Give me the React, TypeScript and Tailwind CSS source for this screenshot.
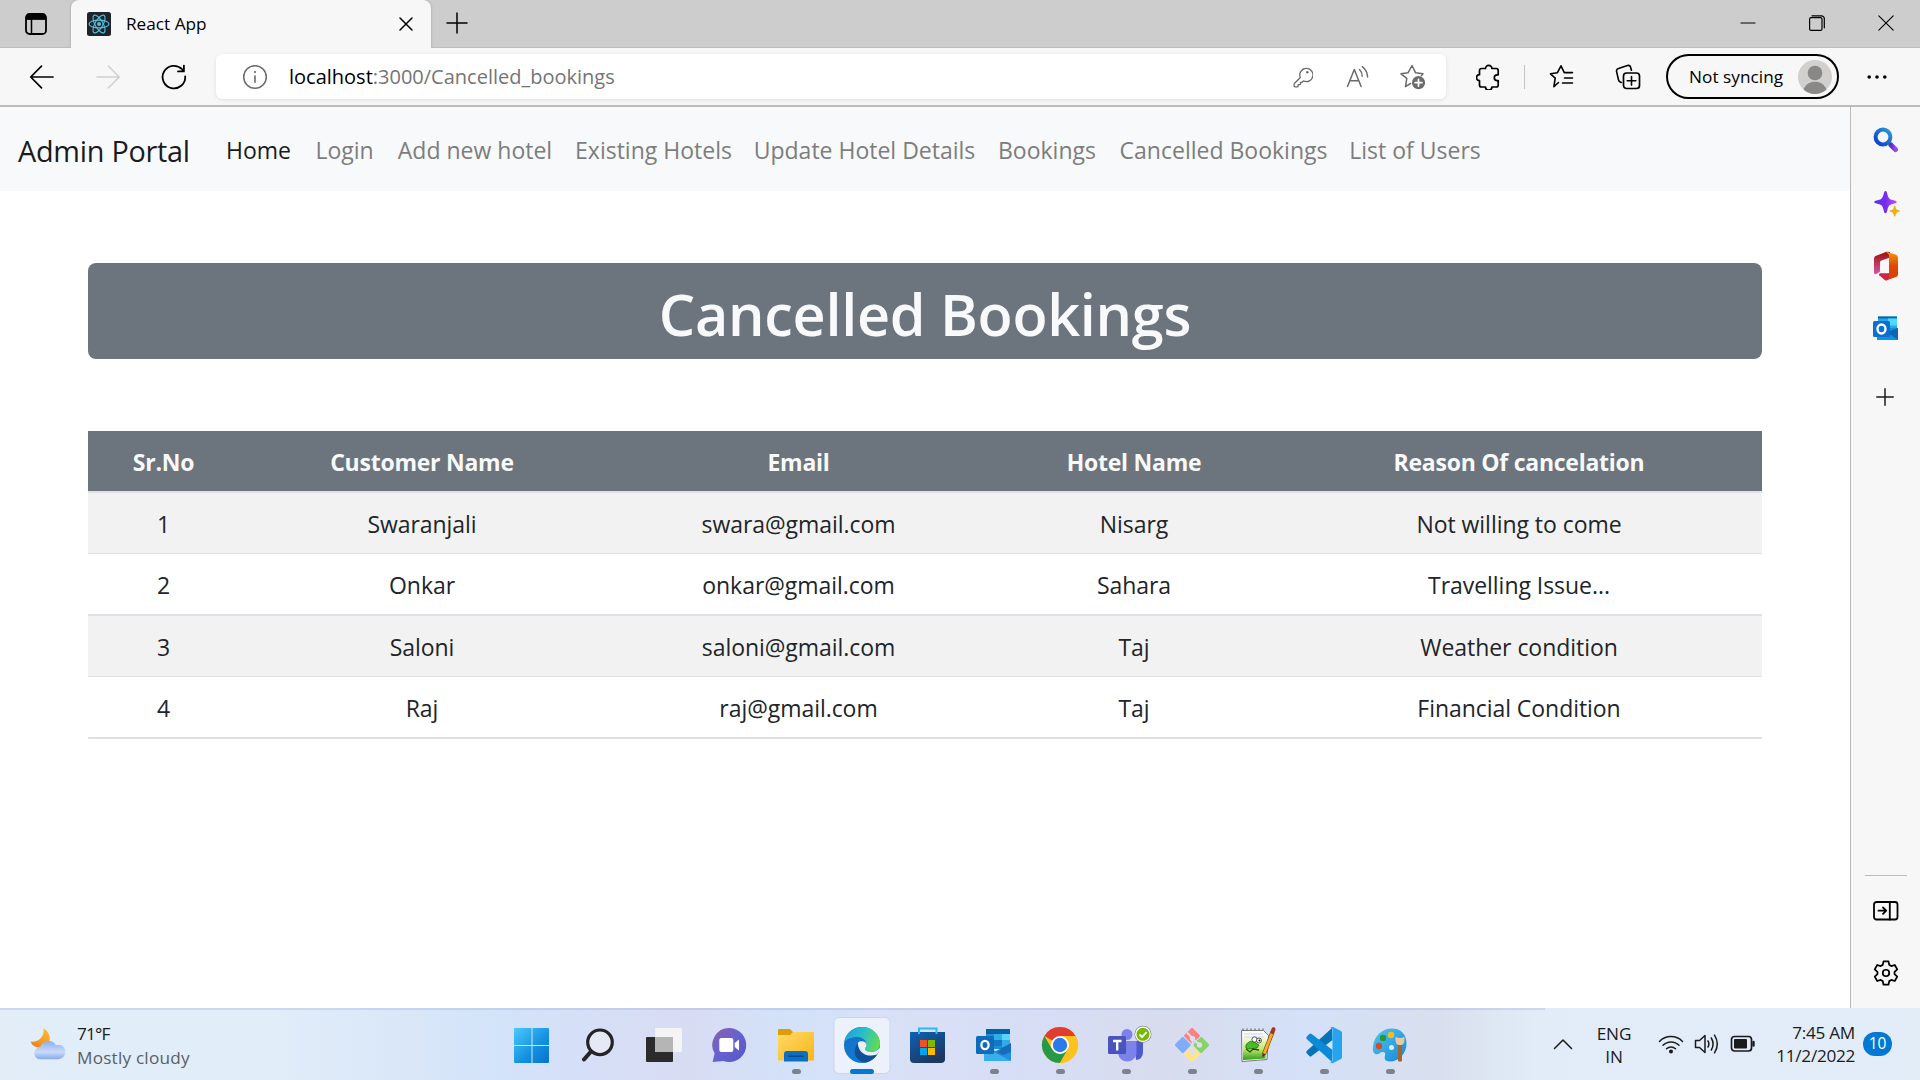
import React from "react";

const navLinks = [
  { label: "Home", cls: "w-[65px] text-[#1a1b1c]" },
  { label: "Login", cls: "w-[59px] text-[#7c7d7d]" },
  { label: "Add new hotel", cls: "w-[154px] text-[#7c7d7d]" },
  { label: "Existing Hotels", cls: "w-[155px] text-[#7c7d7d]" },
  { label: "Update Hotel Details", cls: "w-[219px] text-[#7c7d7d]" },
  { label: "Bookings", cls: "w-[98px] text-[#7c7d7d]" },
  { label: "Cancelled Bookings", cls: "w-[207px] text-[#7c7d7d]" },
  { label: "List of Users", cls: "w-[128px] text-[#7c7d7d]" },
];

const columns = ["Sr.No", "Customer Name", "Email", "Hotel Name", "Reason Of cancelation"];

const rows = [
  ["1", "Swaranjali", "swara@gmail.com", "Nisarg", "Not willing to come"],
  ["2", "Onkar", "onkar@gmail.com", "Sahara", "Travelling Issue..."],
  ["3", "Saloni", "saloni@gmail.com", "Taj", "Weather condition"],
  ["4", "Raj", "raj@gmail.com", "Taj", "Financial Condition"],
];

type IconProps = { children: React.ReactNode; w?: number; h?: number; className?: string };

function Icon({ children, w = 24, h = 24, className = "" }: IconProps) {
  return (
    <svg width={w} height={h} viewBox={`0 0 ${w} ${h}`} fill="none" stroke="currentColor" strokeWidth="1.6" strokeLinecap="round" strokeLinejoin="round" className={"shrink-0 " + className}>
      {children}
    </svg>
  );
}

function ReactLogo() {
  return (
    <svg width="24" height="24" viewBox="0 0 24 24" fill="none" className="shrink-0">
      <rect width="24" height="24" rx="2.5" fill="#20232a" />
      <g stroke="#53c1de" strokeWidth="1.1">
        <ellipse cx="12" cy="12" rx="10" ry="3.9" transform="rotate(0 12 12)" />
        <ellipse cx="12" cy="12" rx="10" ry="3.9" transform="rotate(60 12 12)" />
        <ellipse cx="12" cy="12" rx="10" ry="3.9" transform="rotate(120 12 12)" />
      </g>
      <circle cx="12" cy="12" r="2" fill="#53c1de" />
    </svg>
  );
}

function TabStrip() {
  return (
    <div className="flex h-12 items-stretch border-b border-[#bdbdbd] bg-[#cdcdcd]">
      <div className="flex w-[71px] items-center justify-center text-black">
        <Icon w={22} h={22}>
          <rect x="1" y="1" width="20" height="20" rx="3.5" strokeWidth="1.8" />
          <path d="M1.5 6V4a3 3 0 0 1 3-3h13a3 3 0 0 1 3 3v2z" fill="currentColor" strokeWidth="1" />
          <path d="M6.5 6v15" strokeWidth="1.5" />
        </Icon>
      </div>
      <div className="-mb-px flex w-[360px] items-center rounded-t-lg bg-[#f7f7f7] pl-4 pr-[18px] shadow-[0_0_3px_rgba(0,0,0,0.2)] [clip-path:inset(0_-4px_0_-4px)]">
        <ReactLogo />
        <span className="ml-[15px] flex-1 text-[17.2px] text-black">React App</span>
        <Icon w={14} h={14} className="text-black">
          <path d="M1 1l12 12M13 1L1 13" strokeWidth="1.5" />
        </Icon>
      </div>
      <div className="ml-[15px] flex items-center pb-px text-black">
        <Icon w={22} h={22}>
          <path d="M11 1v20M1 11h20" strokeWidth="1.5" />
        </Icon>
      </div>
      <div className="ml-auto flex items-center pb-px text-black">
        <div className="flex w-[69px] justify-center">
          <Icon w={16} h={16}><path d="M1 8h14" strokeWidth="1.2" /></Icon>
        </div>
        <div className="flex w-[69px] justify-center">
          <Icon w={16} h={16}>
            <rect x="0.6" y="2.6" width="12.4" height="12.8" rx="1.5" strokeWidth="1.2" />
            <path d="M3 .8h9.5a2.8 2.8 0 0 1 2.8 2.8v9.2" strokeWidth="1.2" />
          </Icon>
        </div>
        <div className="flex w-[69px] justify-center">
          <Icon w={16} h={16}><path d="M.8.8l14.4 14.4M15.2.8L.8 15.2" strokeWidth="1.1" /></Icon>
        </div>
      </div>
    </div>
  );
}

function AddressBar() {
  return (
    <div className="flex h-[45px] w-[1230px] items-center rounded-md bg-white pl-[26px] pr-[20px] text-[#6b6b6b] shadow-[0_1px_4px_rgba(0,0,0,0.1)]">
      <Icon w={26} h={26}>
        <circle cx="13" cy="13" r="11.3" strokeWidth="1.5" />
        <path d="M13 12v6.2" strokeWidth="1.6" />
        <circle cx="13" cy="8" r="1.1" fill="currentColor" stroke="none" />
      </Icon>
      <span className="ml-[21px] flex-1 text-[20px] text-[#757575]">
        <span className="text-black">localhost</span>:3000/Cancelled_bookings
      </span>
      <Icon w={20} h={22} className="mr-[33px]">
        <path d="M7.3 11.5L1.6 17.2a1.5 1.5 0 0 0-.5 1.1V20a.9.9 0 0 0 .9.9h2.2a.9.9 0 0 0 .9-.9v-1.3h1.6a.8.8 0 0 0 .8-.8v-1.6h1.6l1.4-1.4a6.6 6.6 0 1 0-3.2-3.4z" strokeWidth="1.3" />
        <circle cx="14.3" cy="6.2" r="1.2" fill="currentColor" stroke="none" />
      </Icon>
      <Icon w={24} h={24} className="mr-[30px]">
        <path d="M1.5 21.5L8.3 4.5l6.8 17M4 15.8h8.8" strokeWidth="1.5" />
        <path d="M13.5 4.6c1.8 1.7 2.7 4 2.7 6.6M16.3 1.6c3.2 2.5 5 6 5.3 10.4" strokeWidth="1.4" />
      </Icon>
      <Icon w={26} h={26}>
        <path d="M10.5 19.5l-5 3.1 1.3-8.200L1 9.800l7-1L12 1.500l3.600 7.300 7.400 1-1.500 1.700" strokeWidth="1.500" />
        <circle cx="18.500" cy="18.700" r="6.600" fill="currentColor" stroke="none" />
        <path d="M18.500 15.300v6.800M15.100 18.700h6.800" stroke="#fff" strokeWidth="1.700" />
      </Icon>
    </div>
  );
}

function Toolbar() {
  return (
    <div className="flex h-[59px] items-center border-b-2 border-[#bcbcbc] bg-[#f7f7f7] text-black">
      <Icon w={26} h={26} className="ml-[29px]">
        <path d="M24 13H2M12.500 2.200L1.700 13l10.800 10.800" strokeWidth="1.700" />
      </Icon>
      <Icon w={26} h={26} className="ml-10 text-[#cfcfcf]">
        <path d="M2 13h22M13.500 2.200L24.300 13 13.500 23.800" strokeWidth="1.600" />
      </Icon>
      <Icon w={26} h={26} className="ml-10 mr-[29px]">
        <path d="M24.200 12.500A11.300 11.300 0 1 1 21 5.200l1.700 1.800M22.900 1.600V7.400H17" strokeWidth="1.800" />
      </Icon>
      <AddressBar />
      <Icon w={26} h={26} className="ml-[30px]">
        <path d="M5.500 4.500h4a3.200 3.200 0 0 1 6.400 0h4.300a2 2 0 0 1 2 2v4.300h-1a2.900 2.900 0 0 0 0 5.800h1v4.400a2 2 0 0 1-2 2h-4.300a3.200 3.200 0 0 1-6.400 0h-4a2 2 0 0 1-2-2v-4.300a3 3 0 0 1 0-6V6.500a2 2 0 0 1 2-2z" strokeWidth="1.700" />
      </Icon>
      <div className="ml-[22px] h-6 w-px bg-[#c4c4c4]" />
      <Icon w={26} h={26} className="ml-[24px]">
        <path d="M9.500 18.500l-4.600 4.200 1.300-8.600L1.500 9.800l6.800-1L12 1.800l3.300 6.800h8.200M15.500 14h8M13.500 19h10" strokeWidth="1.600" />
      </Icon>
      <Icon w={26} h={26} className="ml-[40px]">
        <path d="M6.300 18.500L4.900 17.800a3 3 0 0 1-1.400-2L1.600 7.600A2.500 2.500 0 0 1 3.500 4.500l9-2.900a2.500 2.500 0 0 1 3.100 1.700l.8 3" strokeWidth="1.600" />
        <rect x="8.500" y="9" width="16" height="15.500" rx="3" strokeWidth="1.700" />
        <path d="M16.500 12.500v8.600M12.200 16.800h8.600" strokeWidth="1.600" />
      </Icon>
      <div className="ml-[25px] flex h-[45px] w-[173px] items-center justify-between rounded-full border-2 border-black pl-[21px] pr-[5px]">
        <span className="text-[17.2px] tracking-[0.05px]">Not syncing</span>
        <svg width="34" height="34" viewBox="0 0 34 34">
          <circle cx="17" cy="17" r="17" fill="#d2d0ce" />
          <circle cx="17" cy="13" r="7.300" fill="#8a8886" />
          <path d="M5.500 29.500C8 24 12 21.800 17 21.800S26 24 28.500 29.500A17 17 0 0 1 5.500 29.500z" fill="#8a8886" />
        </svg>
      </div>
      <svg width="20" height="6" viewBox="0 0 20 6" className="ml-[28px]">
        <circle cx="2.200" cy="3" r="1.800" /><circle cx="10" cy="3" r="1.800" /><circle cx="17.800" cy="3" r="1.800" />
      </svg>
    </div>
  );
}

function Page() {
  return (
    <main className="flex-1 bg-white">
      <nav className="flex h-[84px] items-center bg-[#f8f9fb] pl-[18px] pt-[3px]">
        <span className="w-[172px] whitespace-nowrap text-[28.800px] tracking-[-0.25px] text-[#1a1b1c]">Admin Portal</span>
        <div className="ml-9 flex gap-6 text-[23px]">
          {navLinks.map((l) => (
            <a key={l.label} className={"flex justify-center whitespace-nowrap " + l.cls}>{l.label}</a>
          ))}
        </div>
      </nav>
      <div className="pl-[88px] pt-[72px]">
        <h1 className="flex h-24 w-[1674px] items-center justify-center rounded-lg bg-[#6c757d] pt-2 text-[57.500px] font-semibold leading-none tracking-[-0.28px] text-[#f8f9fa]">
          Cancelled Bookings
        </h1>
        <table className="mt-[72px] w-[1674px] table-fixed border-separate border-spacing-0 text-center text-[23px] text-[#212529]">
          <colgroup>
            <col className="w-[151px]" /><col className="w-[366px]" /><col className="w-[387px]" /><col className="w-[284px]" /><col className="w-[486px]" />
          </colgroup>
          <thead>
            <tr className="bg-[#6c757d] text-[#f8f9fa]">
              {columns.map((c) => (
                <th key={c} className="h-[62px] border-b-2 border-[#dee2e6] p-0 pt-[3px] font-bold tracking-[-0.25px]">{c}</th>
              ))}
            </tr>
          </thead>
          <tbody>
            {rows.map((r, n) => (
              <tr key={r[0]} className="odd:bg-[#f2f2f2]">
                {r.map((v, i) => (
                  <td key={i} className={"border-[#dee2e6] p-0 pt-[2px] tracking-[-0.05px] " + (n % 2 ? "h-[62px] border-b-2" : "h-[61px] border-b")}>{v}</td>
                ))}
              </tr>
            ))}
          </tbody>
        </table>
      </div>
    </main>
  );
}

function Sidebar() {
  return (
    <aside className="flex w-[70px] flex-col items-center border-l border-[#bababa] bg-[#f7f7f7] text-[#1b1b1b]">
      <svg width="26" height="26" viewBox="0 0 26 26" className="mt-5 shrink-0">
        <defs>
          <linearGradient id="sb1" x1="0" y1="1" x2="1" y2="0"><stop stopColor="#0a3bd0" /><stop offset="1" stopColor="#2c9ad6" /></linearGradient>
          <linearGradient id="sb2"><stop stopColor="#5b2bd6" /><stop offset="1" stopColor="#a044f2" /></linearGradient>
        </defs>
        <path d="M18 18l4.500 4.500" stroke="url(#sb2)" strokeWidth="5" strokeLinecap="round" />
        <path d="M15 15l3 3" stroke="#39417a" strokeWidth="2.500" />
        <circle cx="10" cy="10" r="7.400" fill="none" stroke="url(#sb1)" strokeWidth="4" />
      </svg>
      <svg width="28" height="28" viewBox="0 0 28 28" className="ml-[3px] mt-[37px] shrink-0">
        <path d="M12.500 1c1.300 0 1.500 1.700 2.100 4 .9 3.300 1.900 4.300 5.100 5.100 2.300.6 4 .8 4 2s-1.700 1.400-4 2c-3.200.8-4.200 1.800-5.100 5.100-.6 2.300-.8 4-2.100 4s-1.500-1.700-2.100-4c-.9-3.300-1.900-4.300-5.100-5.100-2.300-.6-4-.8-4-2s1.700-1.400 4-2c3.200-.8 4.200-1.800 5.100-5.100.6-2.300.8-4 2.100-4z" fill="url(#sp)" />
        <path d="M21.700 15.500c1 0 .8 3 2 4s3.300.6 3.300 1.600-2.100.6-3.300 1.600-1 4-2 4-.8-3-2-4-3.300-.6-3.300-1.600 2.100-.6 3.300-1.600 1-4 2-4z" fill="#f2ae13" />
        <defs><linearGradient id="sp" x1="0" x2="1"><stop stopColor="#4b3be0" /><stop offset=".5" stopColor="#7a2af0" /><stop offset="1" stopColor="#bb57f5" /></linearGradient></defs>
      </svg>
      <svg width="26" height="30" viewBox="0 0 26 30" className="mt-[33px] shrink-0">
        <defs>
          <linearGradient id="of1" x1="0" y1="0" x2="0" y2="1"><stop stopColor="#a01010" /><stop offset="1" stopColor="#d658a4" /></linearGradient>
          <linearGradient id="of2" x1="0" y1="0" x2="0" y2="1"><stop stopColor="#f69a07" /><stop offset=".5" stopColor="#dd4706" /><stop offset="1" stopColor="#dd3c04" /></linearGradient>
        </defs>
        <path d="M13.500.800L2.500 5Q1 5.700 1 7.400v13.800Q1 24 3.200 22.900l3-1.700Q7 20.700 7 19.700V11.500Q7 10 8.500 9.500l8.500-3V1z" fill="url(#of1)" />
        <path d="M13 .800L22.500 3.500Q25 4.300 25 6.500v17Q25 25.500 23 26l-10 3.500L16 22V4z" fill="url(#of2)" />
        <path d="M6.300 24.200Q5.500 23 7 22.300h9v5q-1 2.700-4 2z" fill="#cf2442" />
      </svg>
      <svg width="26" height="25" viewBox="0 0 26 25" className="mt-[35px] shrink-0">
        <path d="M5 .500h19v16H5z" fill="#28a8ea" /><path d="M5 .500h19v2H5z" fill="#0a64ad" /><path d="M15 2.500h9v7h-9z" fill="#50d9ff" />
        <path d="M4 12h21v12H4z" fill="#1490df" /><path d="M25 12v12L14 16z" fill="#1066b5" />
        <rect y="5" width="17" height="16" rx="1.500" fill="#0a6fd0" />
        <ellipse cx="8.500" cy="13" rx="4" ry="4.500" fill="none" stroke="#fff" strokeWidth="2.400" />
      </svg>
      <Icon w={18} h={18} className="mt-[47px] mr-px"><path d="M9 .800v16.400M.800 9h16.400" strokeWidth="1.500" /></Icon>
      <div className="mt-auto h-px w-[42px] shrink-0 bg-[#bcbcbc]" />
      <Icon w={26} h={20} className="mt-[25px] text-black">
        <rect x="1" y="1" width="23.500" height="17.500" rx="2.500" strokeWidth="1.800" />
        <path d="M16.800 1v17.500M5.500 9.700h7.500M10 6.500l3.200 3.200L10 12.900" strokeWidth="1.800" />
      </Icon>
      <svg width="26" height="26" viewBox="0 0 24 24" fill="none" stroke="#000" strokeWidth="1.600" strokeLinejoin="round" className="mb-[22px] mt-[39px] shrink-0">
        <path d="M9.700 1h4.600l.7 3.200 1.900 1.100 3.200-1 2.300 4-2.500 2.300v2.200l2.500 2.300-2.300 4-3.200-1-1.900 1.100-.7 3.300H9.700L9 19.200l-1.900-1.100-3.200 1-2.300-4 2.500-2.300v-2.200L1.600 8.300l2.300-4 3.200 1L9 4.200z" transform="translate(0 .3)" />
        <circle cx="12" cy="12" r="3" />
      </svg>
    </aside>
  );
}

const taskIcons: { name: string; art: React.ReactNode; mark?: "dot" | "active" }[] = [
  {
    name: "start",
    art: (
      <g fill="url(#win)">
        <path d="M17 20h16.500v17H16V21q0-1 1-1zM34.500 20H50q1 0 1 1v16H34.500zM16 38h17.500v17H17q-1 0-1-1zM34.500 38H51v16q0 1-1 1H34.500z" />
      </g>
    ),
  },
  {
    name: "search",
    art: (
      <g fill="none" stroke="#242424" strokeLinecap="round">
        <circle cx="36" cy="34.300" r="12.300" strokeWidth="3.200" fill="#e4e9f5" />
        <path d="M27 43.500l-7 8" strokeWidth="4" />
      </g>
    ),
  },
  {
    name: "task view",
    art: (
      <g>
        <rect x="16" y="29" width="27" height="25" rx="1" fill="#2b2b2b" />
        <rect x="25" y="20" width="27" height="24" rx="1" fill="#f4f4f4" />
        <rect x="25" y="29" width="18" height="15" fill="#b5b5b5" />
      </g>
    ),
  },
  {
    name: "chat",
    art: (
      <g>
        <path d="M33.500 20a17 17 0 1 1-6 33L16.600 54l2-8.500A17 17 0 0 1 33.500 20z" fill="url(#chat)" />
        <rect x="23.300" y="30" width="14" height="14" rx="2" fill="#fff" />
        <path d="M38.700 35l4.300-3.500v11L38.700 39z" fill="#fff" />
      </g>
    ),
  },
  {
    name: "files",
    mark: "dot",
    art: (
      <g>
        <path d="M17 21h11l3 3h20q1 0 1 1v8H16V22q0-1 1-1z" fill="#dd9c0a" />
        <path d="M16 27h12l3-3h20q1 0 1 1v27.500H16z" fill="url(#folder)" />
        <path d="M22 53.500V46q0-3 3-3h18q3 0 3 3v7.500z" fill="#0c6fc4" />
        <path d="M27 48.300h14" stroke="#084b8c" strokeWidth="1.500" strokeLinecap="round" />
      </g>
    ),
  },
  {
    name: "edge",
    mark: "active",
    art: (
      <g>
        <circle cx="34" cy="37" r="18" fill="url(#edgeb)" />
        <path d="M16.200 34.500C17.500 25 25 19 34 19c10.500 0 18 7.500 18 16.500 0 5-4 8.500-8.500 8.500-4 0-6.500-1.500-6.500-3 0-1.200 1.500-2 1.500-4.500 0-4-4-7.500-9.500-7.500-6 0-10.500 2.300-12.800 5.500z" fill="url(#edgeg)" />
        <path d="M29.500 36.500C27 39 26 42 27 46c1.300 5.300 6 8.500 11 8.500 5.500-1.500 9.500-5 11.500-9-3 1.500-5 2-8 2-6 0-11.500-5-11.500-11z" fill="#0f4f98" />
        <path d="M30 34.500c3-2.500 8.500-1.500 8.500 2.300 0 2-1.500 3-1.500 4.200 0 1.500 2.500 3.100 6.500 3.100 3.500 0 6-1.500 8-4.100l1 1-3.500 5.500c-2.500 1-5.500 1.300-8.500 1-6-.7-11-6.500-10.500-13z" fill="#eaf0fb" />
      </g>
    ),
  },
  {
    name: "store",
    art: (
      <g>
        <path d="M25 27v-6.500h17.500V27" fill="none" stroke="#25bdf0" strokeWidth="2" />
        <path d="M16 24h35v27q0 4-4 4H20q-4 0-4-4z" fill="url(#store)" />
        <path d="M25 26v-2M42.500 26v-2" stroke="#25bdf0" strokeWidth="2" />
        <path d="M26 32h7v7h-7z" fill="#f25022" /><path d="M34 32h7v7h-7z" fill="#7fba00" />
        <path d="M26 40h7v7h-7z" fill="#00a4ef" /><path d="M34 40h7v7h-7z" fill="#ffb900" />
      </g>
    ),
  },
  {
    name: "outlook",
    mark: "dot",
    art: (
      <g>
        <path d="M26 21h24v20H26z" fill="#1b8fd8" /><path d="M26 21h24v5H26z" fill="#0562a8" /><path d="M42 26h8v6h-8z" fill="#58d4fb" /><path d="M34 26h8v6h-8zM42 32h8v7h-8z" fill="#30ace8" /><path d="M34 32h8v6h-8z" fill="#1478c8" />
        <path d="M24 37l13 7 14-9v17q0 1-1 1H25q-1 0-1-1z" fill="#2390dd" /><path d="M24 39l27 14H25q-1 0-1-1z" fill="#37aeee" /><path d="M35 43.500L51 35v9l-8 3z" fill="#1461b0" opacity=".75" />
        <rect x="16" y="28" width="18" height="18" rx="1.500" fill="#0f6cbd" />
        <ellipse cx="25" cy="37" rx="3.600" ry="4.100" fill="none" stroke="#fff" strokeWidth="2.300" />
      </g>
    ),
  },
  {
    name: "chrome",
    mark: "dot",
    art: (
      <g>
        <circle cx="34" cy="37" r="18" fill="#fcc31e" />
        <path d="M34 37L18.400 28A18 18 0 0 1 49.600 28H34z" fill="#e33b2e" />
        <path d="M18.400 28A18 18 0 0 0 34 55l7.800-13.500L34 37l-7.800 4.500z" fill="#279847" />
        <path d="M34 28h15.600A18 18 0 0 1 34 55l7.800-13.500z" fill="#fcc31e" />
        <circle cx="34" cy="37" r="9" fill="#fff" /><circle cx="34" cy="37" r="7.200" fill="#2a7ae9" />
      </g>
    ),
  },
  {
    name: "teams",
    mark: "dot",
    art: (
      <g>
        <circle cx="35" cy="26.500" r="5.500" fill="#7b83eb" />
        <path d="M42 33h9v11q0 7-7 8z" fill="#5059c9" />
        <path d="M26 33h18.500v11c0 5.500-4 9.500-9.300 9.500S26 49.500 26 44z" fill="#7b83eb" />
        <rect x="16" y="28" width="18" height="18" rx="1.500" fill="#4b53bc" />
        <path d="M21 33h8.500M25.200 33v9.500" stroke="#fff" strokeWidth="2.300" />
        <circle cx="51" cy="26.300" r="8.500" fill="#8a8f96" /><circle cx="51" cy="26.300" r="7.800" fill="#fff" /><circle cx="51" cy="26.300" r="6.500" fill="#76b900" />
        <path d="M47.500 26.500l2.500 2.600 4.600-5" fill="none" stroke="#fff" strokeWidth="1.900" />
      </g>
    ),
  },
  {
    name: "git",
    mark: "dot",
    art: (
      <g>
        <g transform="rotate(45 34 37)">
          <rect x="21.500" y="24.500" width="12" height="12" rx="1.500" fill="#ff8080" />
          <rect x="34.500" y="24.500" width="12" height="12" rx="1.500" fill="#8bd266" />
          <rect x="21.500" y="37.500" width="12" height="12" rx="1.500" fill="#7fadfa" />
          <rect x="34.500" y="37.500" width="12" height="12" rx="1.500" fill="#ffe48a" />
        </g>
        <path d="M29 24.500l5.500 6v13M35 31l6 5.500" stroke="#d9e0f2" strokeWidth="2" fill="none" />
        <circle cx="34.500" cy="30.500" r="2.600" fill="#d9e0f2" /><circle cx="34.500" cy="44" r="2.800" fill="#d9e0f2" /><circle cx="41.500" cy="37" r="2.700" fill="#d9e0f2" />
      </g>
    ),
  },
  {
    name: "notepad",
    mark: "dot",
    art: (
      <g>
        <path d="M17.500 22.500h22l5 5-1.500 24-25 2z" fill="#fafafa" stroke="#6b6b6b" strokeWidth=".9" />
        <path d="M20 26h19M20 29h20" stroke="#b9cfe0" strokeWidth=".8" />
        <path d="M19 30h23.500l-1 20.500-22.500 1.500z" fill="url(#npp)" />
        <path d="M19 22v-1.500M23 22v-1.500M27 22v-1.500M31 22v-1.500M35 22v-1.500M39 22v-1.500" stroke="#555" />
        <path d="M22 37q3-5 8-3l5 3-2 3-9 1q-3 0-2-4z" fill="#43bf22" stroke="#276a16" strokeWidth=".8" />
        <circle cx="30.500" cy="31.500" r="2.600" fill="#fff" stroke="#333" strokeWidth=".8" /><circle cx="35" cy="32.500" r="2.500" fill="#fff" stroke="#333" strokeWidth=".8" /><circle cx="35.500" cy="32.500" r="1" />
        <path d="M22 41l4 3 3-3 6 1" fill="none" stroke="#234d16" strokeWidth="1.300" />
        <path d="M40 46l8.500-22" stroke="#7a4b08" strokeWidth="4.200" /><path d="M40 46l8.500-22" stroke="#f7ad28" strokeWidth="2.800" />
        <path d="M48.500 24l1-2.800" stroke="#a93226" strokeWidth="4" strokeLinecap="round" />
        <path d="M38.300 45l3.500 1.300-3.400 3.500z" fill="#4a3b20" />
      </g>
    ),
  },
  {
    name: "vscode",
    mark: "dot",
    art: (
      <g>
        <path d="M42 20L16.700 43q-1 1.200 0 2.300l2.600 2.800q1.200 1 2.400 0L42.500 32z" fill="#0673b8" />
        <path d="M42 54L16.700 31q-1-1.200 0-2.300l2.600-2.800q1.200-1 2.400 0L42.500 42z" fill="#0b8ad6" />
        <path d="M40 19.500q1.500-1 3-.4l7.500 3.600Q52 23.500 52 25v24q0 1.500-1.500 2.300L43 54.900q-1.500.6-3-.4 2.500 0 2.500-2.500V22q0-2.500-2.500-2.500z" fill="#25a4f0" />
      </g>
    ),
  },
  {
    name: "paint",
    mark: "dot",
    art: (
      <g>
        <path d="M36 20.500c9 0 14.500 6 14.500 15 0 10-7.500 18-16.500 18-5 0-6-3-5-6 .8-2.500-.5-4-3-3.500-2 .4-3.500 3-6.500 2-2.500-1-2.800-4-2.500-7.500C18 28 26 20.500 36 20.500z" fill="url(#paint)" />
        <circle cx="23" cy="38" r="3.200" fill="#d8482a" /><circle cx="27" cy="30" r="3.200" fill="#259a34" /><circle cx="35" cy="27" r="3.200" fill="#fbb91c" />
        <circle cx="35.500" cy="39.500" r="2.500" fill="#e4eaf6" />
        <path d="M42 36h4v17q-2 1.500-4 0z" fill="#a9642c" /><path d="M39.500 29q4.500 2 9 0 .5 7-3 8h-3q-3.500-1-3-8z" fill="#eac9a2" />
      </g>
    ),
  },
];

function Taskbar() {
  return (
    <footer className="relative flex h-[72px] items-center bg-[linear-gradient(90deg,#e2edf8_0%,#e1edf8_14%,#d8e6f8_22%,#d3e3f9_26%,#d6dff7_31%,#d8dcf3_36%,#d3e2f9_41%,#d9e0f6_48%,#d6def6_53%,#d8dcee_61%,#d4e1f8_68%,#d9dfee_75%,#e1ecf8_80%,#e2edf8_100%)] text-[#1b1b1b]">
      <div className="absolute left-0 top-0 h-[2px] w-[1545px] bg-[#516ba0]/15" />
      <div className="flex w-[498px] items-center pl-[30px]">
        <svg width="36" height="32" viewBox="0 0 36 32">
          <defs>
            <linearGradient id="moon" x1="0" y1="1" x2="1" y2="0"><stop stopColor="#ee7a1b" /><stop offset="1" stopColor="#fdc22b" /></linearGradient>
            <linearGradient id="cloud" x1="0" y1="0" x2="0" y2="1"><stop stopColor="#8aaef3" /><stop offset=".6" stopColor="#c9dbf9" /><stop offset="1" stopColor="#86a9ee" /></linearGradient>
          </defs>
          <path d="M13.500.500a11 11 0 0 1-13 13C2 18 7 20.500 12 19.500S21 13 19.500 8C18.500 4.500 16.500 2 13.500.500z" fill="url(#moon)" />
          <path d="M10.500 31.300a6 6 0 0 1-.5-12A9 9 0 0 1 26 17a7.300 7.300 0 1 1 2 14.300z" fill="url(#cloud)" />
        </svg>
        <div className="ml-[11px] pt-[3px] text-[17.200px] leading-6">
          <div className="tracking-[-0.8px]">71°F</div>
          <div className="tracking-[0.2px] text-[#5a5f66]">Mostly cloudy</div>
        </div>
      </div>
      <svg width="0" height="0" className="absolute">
        <defs>
          <linearGradient id="win" x1="0" y1="0" x2="1" y2="1"><stop stopColor="#4cc9fb" /><stop offset=".6" stopColor="#1290e0" /><stop offset="1" stopColor="#0571cd" /></linearGradient>
          <linearGradient id="chat" x1="0" y1="0" x2="1" y2="1"><stop stopColor="#8b5fae" /><stop offset=".5" stopColor="#6562d0" /><stop offset="1" stopColor="#5456c4" /></linearGradient>
          <linearGradient id="folder" x1="0" y1="0" x2="1" y2="1"><stop stopColor="#ffd96a" /><stop offset="1" stopColor="#fbb614" /></linearGradient>
          <linearGradient id="edgeb" x1="0" y1="0" x2=".6" y2="1"><stop stopColor="#1b6dc0" /><stop offset="1" stopColor="#0c7cd8" /></linearGradient>
          <linearGradient id="edgeg" x1="0" y1=".3" x2="1" y2=".6"><stop stopColor="#1aa2dc" /><stop offset=".5" stopColor="#2bc0c5" /><stop offset="1" stopColor="#63dc4c" /></linearGradient>
          <linearGradient id="store" x1="0" y1="0" x2=".6" y2="1"><stop stopColor="#0d62b4" /><stop offset="1" stopColor="#1e3660" /></linearGradient>
          <linearGradient id="npp" x1="0" y1="0" x2="0" y2="1"><stop stopColor="#f4fbd8" /><stop offset=".5" stopColor="#c5e86c" /><stop offset="1" stopColor="#2b9d1c" /></linearGradient>
          <linearGradient id="paint" x1="0" y1="0" x2="1" y2="1"><stop stopColor="#4fc8f4" /><stop offset="1" stopColor="#1587d4" /></linearGradient>
        </defs>
      </svg>
      <div className="flex">
        {taskIcons.map((t) => (
          <svg key={t.name} width="66" height="72" viewBox="0 0 66 72">
            {t.mark === "active" && <rect x="6" y="9.500" width="56" height="56" rx="5" fill="#ecf1fb" stroke="#cdd5e8" strokeWidth="1" />}
            {t.art}
            {t.mark === "active" && <rect x="22" y="61" width="24" height="5" rx="2.500" fill="#0078d4" />}
            {t.mark === "dot" && <rect x="30" y="61" width="9" height="5" rx="2.500" fill="#7d828d" />}
          </svg>
        ))}
      </div>
      <div className="ml-auto flex items-center pr-[28px] text-[17.200px]">
        <Icon w={20} h={12} className="mr-[23px]"><path d="M1.500 10.500L10 2l8.500 8.500" strokeWidth="1.500" /></Icon>
        <div className="w-[36px] pt-px text-center leading-[23px] tracking-[-0.1px]"><div>ENG</div><div>IN</div></div>
        <Icon w={26} h={20} className="ml-[26px]">
          <path d="M1.500 7.500a16 16 0 0 1 23 0M5 11.300a11.300 11.300 0 0 1 16 0M8.500 14.800a6.400 6.400 0 0 1 9 0" strokeWidth="1.500" />
          <circle cx="13" cy="17.500" r="2" fill="currentColor" stroke="none" />
        </Icon>
        <Icon w={26} h={22} className="ml-[10px]">
          <path d="M1.500 7.500v7h4l5.500 5V2.500l-5.500 5zM14 8q1.800 3 0 6M17.300 5q3.600 6 0 12M20.500 2.200q5.600 8.800 0 17.600" strokeWidth="1.500" />
        </Icon>
        <Icon w={26} h={18} className="ml-[10px]">
          <rect x="1.500" y="1.500" width="20" height="14.500" rx="3" strokeWidth="1.700" />
          <rect x="4" y="4" width="13" height="9.500" rx="1" fill="currentColor" stroke="none" />
          <path d="M23.500 7v3.500" strokeWidth="2.400" />
        </Icon>
        <div className="ml-[17px] w-[82px] whitespace-nowrap text-right leading-[23px] tracking-[-0.3px]"><div>7:45 AM</div><div>11/2/2022</div></div>
        <div className="ml-[8px] flex h-6 w-[29px] items-center justify-center rounded-full bg-[#0078d4] text-[15.500px] text-white">10</div>
      </div>
    </footer>
  );
}

export default function App() {
  return (
    <div className="flex h-[1080px] w-[1920px] flex-col overflow-hidden bg-white font-['Open_Sans',sans-serif]">
      <TabStrip />
      <Toolbar />
      <div className="flex h-[901px]">
        <Page />
        <Sidebar />
      </div>
      <Taskbar />
    </div>
  );
}
